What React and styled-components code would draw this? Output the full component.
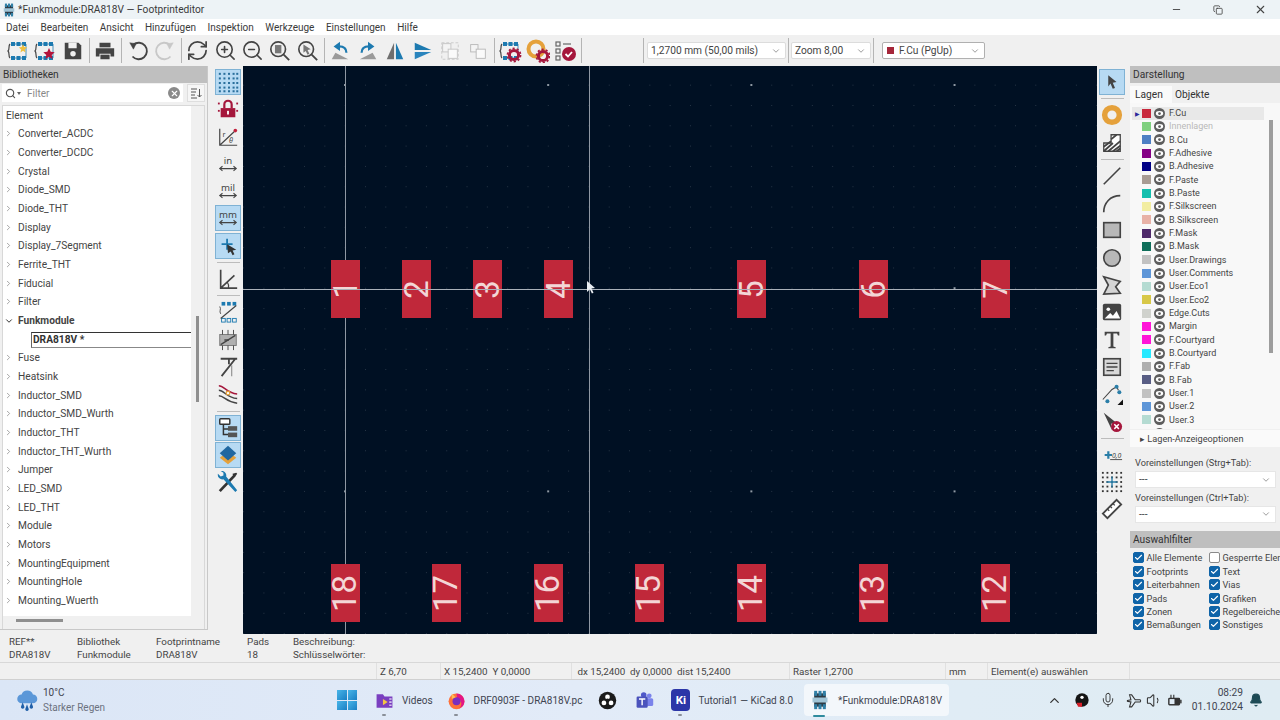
import React from "react";
import styled, { createGlobalStyle } from "styled-components";
import {
  Check,
  ChevronDown,
  ChevronRight,
  ChevronUp,
  Copy,
  Minus,
  RefreshCw,
  Search,
  X,
  ZoomIn,
  ZoomOut,
  Mic,
  Volume1,
  Bell,
} from "lucide-react";

const BLUE = "#1d7ab0";
const DARK = "#444444";
const RED = "#a5173c";
const ORANGE = "#e5a13b";
const GREY = "#9a9a9a";

const GlobalStyle = createGlobalStyle`
  html, body {
    margin: 0;
    padding: 0;
    width: 1280px;
    height: 720px;
    overflow: hidden;
    background: #f0f0f0;
    font-family: "Roboto", "Noto Sans", sans-serif;
    font-size: 10px;
    color: #333;
  }
  * { box-sizing: border-box; }
`;

const Window = styled.div`
  width: 1280px;
  height: 720px;
  display: flex;
  flex-direction: column;
  overflow: hidden;
`;

/* title + menu */
const TitleBar = styled.div`
  height: 19px;
  background: #edf3f6;
  display: flex;
  align-items: center;
  padding-left: 2px;
  gap: 2px;
  font-size: 10.2px;
  color: #3a3a3a;
`;

const TitleText = styled.span`
  flex: 1;
`;

const WinButton = styled.div`
  width: 40px;
  display: flex;
  justify-content: center;
  color: #444;
`;

const MenuBar = styled.div`
  height: 16px;
  background: #fff;
  display: flex;
  align-items: center;
  padding-left: 6px;
  gap: 11.5px;
  font-size: 10px;
  color: #3a3a3a;
`;

/* top toolbar */
const Toolbar = styled.div`
  height: 31px;
  background: #f0f0f0;
  display: flex;
  align-items: center;
  padding-left: 4px;
`;

const ToolButton = styled.div`
  width: 27.5px;
  height: 27px;
  display: flex;
  align-items: center;
  justify-content: center;
`;

const ToolSep = styled.div`
  width: 5px;
  height: 25px;
  margin-left: ${(p) => p.$ml || 0}px;
  display: flex;
  justify-content: center;
  &::after {
    content: "";
    width: 1px;
    background: #b4b4b4;
  }
`;

const Combo = styled.div`
  width: ${(p) => p.$w}px;
  height: ${(p) => p.$h || 17}px;
  background: #fff;
  border: 1px solid ${(p) => p.$border || "#dcdcdc"};
  border-radius: 2px;
  display: flex;
  align-items: center;
  justify-content: space-between;
  padding: 0 4px 0 3px;
  font-size: 10.2px;
  color: #444;
  margin-left: ${(p) => p.$ml || 0}px;
`;

const ComboLabel = styled.span`
  display: flex;
  align-items: center;
  gap: 5px;
  padding-left: 1px;
`;

const LayerDot = styled.span`
  width: 7px;
  height: 7px;
  background: #a5263a;
`;

/* main area */
const Main = styled.div`
  height: 568px;
  display: flex;
`;

const LeftPanel = styled.div`
  width: 208px;
  display: flex;
  flex-direction: column;
  border-right: 1px solid #c8c8c8;
  border-bottom: 1px solid #c8c8c8;
  margin-bottom: 4px;
`;

const PanelHeader = styled.div`
  height: 17px;
  flex: none;
  margin-top: ${(p) => p.$mt || 0}px;
  background: #bfbfbf;
  display: flex;
  align-items: center;
  padding-left: 3px;
  font-size: 10.2px;
  color: #333;
`;

const FilterRow = styled.div`
  height: 22px;
  flex: none;
  display: flex;
  align-items: flex-start;
  padding: 1px 2px 0 2px;
  gap: 4px;
`;

const FilterBox = styled.div`
  width: 181px;
  height: 18px;
  background: #fff;
  display: flex;
  align-items: center;
  padding: 0 3px;
  color: #888;
  font-size: 10px;
`;

const FilterCaret = styled.span`
  width: 0;
  height: 0;
  margin-left: 1px;
  border-left: 2.5px solid transparent;
  border-right: 2.5px solid transparent;
  border-top: 3px solid #666;
`;

const FilterHint = styled.span`
  margin-left: 6px;
`;

const FilterClear = styled.span`
  width: 12px;
  height: 12px;
  border-radius: 50%;
  background: #8a8a8a;
  color: #fff;
  display: flex;
  align-items: center;
  justify-content: center;
  margin-left: auto;
`;

const SortButton = styled.div`
  width: 18px;
  height: 18px;
  display: flex;
  align-items: center;
  justify-content: center;
  background: #f6f6f6;
  border: 1px solid #dedede;
`;

const TreeFrame = styled.div`
  position: relative;
  flex: 1;
  margin-left: 2px;
  margin-right: 2px;
  border: 1px solid #d8d8d8;
  border-width: 1px 1px 0 1px;
  overflow: hidden;
`;

const Tree = styled.div`
  width: 188px;
  height: 510px;
  background: #fff;
  overflow: hidden;
`;

const TreeRow = styled.div`
  height: 18.67px;
  display: flex;
  align-items: center;
  font-size: 10.2px;
  color: #444;
  font-weight: ${(p) => (p.$open ? 700 : 400)};
  padding-left: ${(p) => (p.$root ? 3 : 0)}px;
`;

const Chevron = styled.span`
  width: 11px;
  margin-right: 4px;
  display: flex;
  justify-content: center;
  color: ${(p) => (p.$open ? "#333" : "#8a8a8a")};
`;

const EditRow = styled.div`
  height: 18.67px;
  padding: 2px 0 1px 28px;
  display: flex;
`;

const EditBox = styled.div`
  flex: 1;
  border-top: 1px solid #333;
  border-left: 1px solid #666;
  border-bottom: 1px solid #888;
  font-size: 10.2px;
  font-weight: 700;
  color: #333;
  line-height: 14px;
  padding-left: 1px;
`;

const VScrollThumb = styled.div`
  position: absolute;
  left: 193px;
  top: 210px;
  width: 3px;
  height: 86px;
  background: #8f8f8f;
`;

const HScrollThumb = styled.div`
  position: absolute;
  left: 13px;
  bottom: 7px;
  width: 47px;
  height: 3px;
  background: #8f8f8f;
`;

const ToolStrip = styled.div`
  width: ${(p) => p.$w}px;
  flex: none;
  margin-left: ${(p) => p.$ml || 0}px;
  display: flex;
  flex-direction: column;
  align-items: center;
  padding-top: 3px;
`;

const StripButton = styled.div`
  width: 26px;
  height: 26px;
  flex: none;
  margin-bottom: 1.3px;
  display: flex;
  align-items: center;
  justify-content: center;
  background: ${(p) => (p.$on ? "#b7daf3" : "transparent")};
  border: 1px solid ${(p) => (p.$on ? "#7fb2d4" : "transparent")};
`;

const StripSep = styled.div`
  width: 23px;
  height: 1px;
  flex: none;
  background: #bcbcbc;
  margin: 2px 0 3px 0;
`;

/* canvas, pads sit on a free coordinate system */
const Canvas = styled.div`
  position: relative;
  flex: 1;
  overflow: hidden;
  background-color: #001023;
  background-image:
    radial-gradient(circle, rgba(184, 192, 200, 0.75) 0, rgba(184, 192, 200, 0.75) 0.8px, transparent 1.1px),
    radial-gradient(circle, rgba(130, 140, 150, 0.3) 0, rgba(130, 140, 150, 0.3) 0.5px, transparent 0.8px);
  background-size: 203.2px 203.2px, 20.32px 20.32px;
  background-position: 0.4px -82.6px, 92px 9px;
`;

const VLine = styled.div`
  position: absolute;
  top: 0;
  bottom: 0;
  left: ${(p) => p.$x}px;
  width: 1px;
  background: #8f98a3;
  z-index: ${(p) => p.$z};
`;

const HLine = styled.div`
  position: absolute;
  left: 0;
  right: 0;
  top: 222.5px;
  height: 1px;
  background: #aab1b9;
  z-index: 3;
`;

const Pad = styled.div`
  position: absolute;
  left: ${(p) => p.$x - 14.5}px;
  top: ${(p) => p.$y}px;
  width: 29px;
  height: 58px;
  background: #c0283a;
  display: flex;
  align-items: center;
  justify-content: center;
  z-index: 2;
`;

const PadNumber = styled.span`
  transform: rotate(-90deg);
  font-family: "Roboto", "Liberation Sans", sans-serif;
  font-weight: 400;
  font-size: 33px;
  line-height: 1;
  color: #f3d6d6;
`;

const PointerMark = styled.svg`
  position: absolute;
  left: 344px;
  top: 215px;
  z-index: 4;
`;

/* right panel */
const RightPanel = styled.div`
  width: 150px;
  margin-left: 3px;
  flex: none;
  display: flex;
  flex-direction: column;
  overflow: hidden;
`;

const Tabs = styled.div`
  height: 20px;
  flex: none;
  display: flex;
  align-items: flex-end;
`;

const Tab = styled.div`
  height: 17px;
  width: ${(p) => (p.$w ? `${p.$w}px` : "auto")};
  padding: 0 5px;
  margin-left: ${(p) => p.$ml || 0}px;
  background: ${(p) => (p.$active ? "#fafafa" : "transparent")};
  font-size: 10.2px;
  display: flex;
  align-items: center;
  color: #333;
`;

const LayerBox = styled.div`
  position: relative;
  height: 326px;
  flex: none;
  background: #f8f8f8;
  padding: 3.5px 0 0 2px;
  overflow: hidden;
`;

const LayerRow = styled.div`
  width: 132px;
  height: 13.33px;
  flex: none;
  display: flex;
  align-items: center;
  font-size: 9px;
  background: ${(p) => (p.$active ? "#e8e8e8" : "transparent")};
  color: ${(p) => (p.$muted ? "#b8b8b8" : "#444")};
`;

const LayerArrow = styled.span`
  width: 10px;
  font-size: 6px;
  color: #2a2a9a;
  padding-left: 3px;
`;

const Swatch = styled.span`
  width: 9px;
  height: 9px;
  flex: none;
  background: ${(p) => p.$c};
  margin-right: 3px;
`;

const LayerName = styled.span`
  margin-left: 4px;
`;

const LayerScroll = styled.div`
  position: absolute;
  left: 139px;
  top: 17px;
  width: 4px;
  height: 233px;
  background: #9d9d9d;
`;

const DisplayOptions = styled.div`
  height: 17px;
  flex: none;
  background: #fafafa;
  margin-top: 1px;
  padding-left: 10px;
  font-size: 9.2px;
  display: flex;
  align-items: center;
  gap: 1px;
  color: #444;
`;

const PresetLabel = styled.div`
  font-size: 9.2px;
  height: 11px;
  line-height: 11px;
  margin: ${(p) => p.$mt || 0}px 0 3px 5px;
  color: #444;
`;

const Preset = styled(Combo)`
  margin-left: 5px;
  height: 17px;
  border-color: #e6e6e6;
  border-radius: 0;
`;

const FilterGrid = styled.div`
  display: grid;
  grid-template-columns: 76px 80px;
  grid-auto-rows: 13.4px;
  padding: 3.3px 0 0 3px;
  white-space: nowrap;
`;

const CheckItem = styled.div`
  display: flex;
  align-items: center;
  gap: 2.5px;
  font-size: 9.2px;
  color: #444;
`;

const CheckMark = styled.span`
  width: 11px;
  height: 11px;
  flex: none;
  border-radius: 2px;
  background: ${(p) => (p.$off ? "#fff" : "#0f64a8")};
  border: 1px solid ${(p) => (p.$off ? "#8a8a8a" : "#0f64a8")};
  color: #fff;
  display: flex;
  align-items: center;
  justify-content: center;
`;

/* bottom bars */
const MessagePanel = styled.div`
  height: 28px;
  background: #f0f0f0;
  display: flex;
  padding: 1px 0 0 9px;
  font-size: 9.8px;
  color: #444;
`;

const MessageColumn = styled.div`
  width: ${(p) => p.$w}px;
  line-height: 13px;
`;

const StatusBar = styled.div`
  height: 18px;
  background: #f0f0f0;
  border-top: 1px solid #d8d8d8;
  border-bottom: 1px solid #d0d0d0;
  display: flex;
  font-size: 9.8px;
  color: #444;
`;

const StatusCell = styled.div`
  width: ${(p) => p.$w}px;
  flex: none;
  padding-left: 3px;
  line-height: 17px;
  border-right: 1px solid #e0e0e0;
  white-space: pre;
`;

const Taskbar = styled.div`
  height: 40px;
  background: linear-gradient(90deg, #dbe6f6 0%, #e2ebf8 45%, #e0ecf5 75%, #dfecf3 100%);
  display: flex;
  align-items: center;
  font-size: 10px;
  color: #3f4450;
`;

const Weather = styled.div`
  width: 337px;
  flex: none;
  padding-left: 14px;
  display: flex;
  align-items: center;
  gap: 3px;
`;

const WeatherText = styled.div`
  line-height: 15px;
  & > span {
    display: block;
    color: #6c7280;
  }
`;

const StartGrid = styled.div`
  width: 20px;
  flex: none;
  margin-right: 11px;
  display: grid;
  grid-template-columns: 9.5px 9.5px;
  grid-auto-rows: 9.5px;
  gap: 1px;
`;

const StartTile = styled.span`
  background: linear-gradient(135deg, #48b5e8, #1a7fc4);
`;

const TaskItem = styled.div`
  position: relative;
  height: 32px;
  flex: none;
  padding: 0 ${(p) => p.$pad || 7}px;
  margin-left: ${(p) => p.$ml || 0}px;
  width: ${(p) => (p.$w ? `${p.$w}px` : "auto")};
  display: flex;
  align-items: center;
  gap: 8px;
  white-space: nowrap;
  border-radius: 4px;
  background: ${(p) => (p.$active ? "#f3f7fb" : "transparent")};
`;

const RunDash = styled.span`
  position: absolute;
  bottom: ${(p) => (p.$active ? -1 : 0)}px;
  left: ${(p) => p.$left}px;
  width: ${(p) => (p.$active ? 12 : 4)}px;
  height: 2px;
  border-radius: 1px;
  background: ${(p) => (p.$active ? "#2f8b9e" : "#8a8f98")};
`;

const Tray = styled.div`
  margin-left: auto;
  padding-right: 17px;
  display: flex;
  align-items: center;
`;

const TrayIcon = styled.span`
  display: flex;
  margin-left: ${(p) => p.$ml || 0}px;
  color: #333;
`;

const Clock = styled.div`
  margin-left: 9px;
  text-align: right;
  line-height: 14px;
  font-size: 10.2px;
`;

const Svg = ({ s = 22, children }) => (
  <svg width={s} height={s} viewBox="0 0 24 24" fill="none">
    {children}
  </svg>
);

/* a footprint chip: rows of blue pads with a bracket */
const ChipBase = () => (
  <g fill={BLUE}>
    <rect x="5" y="3" width="4" height="4" />
    <rect x="10.5" y="3" width="4" height="4" />
    <rect x="16" y="3" width="4" height="4" />
    <rect x="5" y="17" width="4" height="4" />
    <rect x="10.5" y="17" width="4" height="4" />
    <rect x="16" y="17" width="4" height="4" />
    <path d="M4 5C2 7 4 10 2 12c2 2 0 5 2 7" stroke={DARK} strokeWidth="1.2" fill="none" />
    <path d="M20 5v14M5 5h15M5 19h15" stroke={BLUE} strokeWidth="0.8" />
  </g>
);

const NewChip = () => (
  <Svg s={24}>
    <ChipBase />
    <path d="M17 5l1.2 3 3 .6-2.4 2 .8 3-2.6-1.8-2.6 1.8.8-3-2.4-2 3-.6z" fill="#f0c040" />
  </Svg>
);
const StarChip = () => (
  <Svg s={24}>
    <ChipBase />
    <path d="M16 9l1.7 3.8 4 .4-3 2.7.9 4-3.6-2.1-3.6 2.1.9-4-3-2.7 4-.4z" fill="#b3123a" />
  </Svg>
);
const SaveIcon = () => (
  <Svg>
    <path d="M3 3h15l3 3v15H3z" fill={DARK} />
    <rect x="7" y="3" width="9" height="6" fill="#f0f0f0" />
    <circle cx="12" cy="15" r="3" fill="#f0f0f0" />
  </Svg>
);
const PrintIcon = () => (
  <Svg>
    <path d="M6 3h12v5H6z" fill={DARK} />
    <path d="M2 9h20v9h-4v-3H6v3H2z" fill={DARK} />
    <path d="M7 16h10v5H7z" fill={DARK} />
  </Svg>
);
const UndoIcon = ({ redo }) => (
  <Svg>
    <g
      stroke={redo ? "#c8c8c8" : DARK}
      strokeWidth="2"
      transform={redo ? "matrix(-1 0 0 1 24 0)" : undefined}
    >
      <path d="M7 5a9 9 0 1 1-1 13" />
      <path d="M3 3l4 7 3-6z" fill={redo ? "#c8c8c8" : DARK} strokeWidth="0.5" />
    </g>
  </Svg>
);
const ZoomFit = () => (
  <Svg>
    <circle cx="10" cy="10" r="8" stroke={DARK} strokeWidth="1.8" />
    <rect x="6.5" y="5.5" width="7" height="9" fill="#777" />
    <path d="M16 16l6 6" stroke={DARK} strokeWidth="2" />
  </Svg>
);
const ZoomSel = () => (
  <Svg>
    <circle cx="10" cy="10" r="8" stroke={DARK} strokeWidth="1.8" />
    <path d="M7 5l8 5-3.5 1 2 4-2 1-2-4L7 14z" fill="#777" />
    <path d="M16 16l6 6" stroke={DARK} strokeWidth="2" />
  </Svg>
);
const RotateIcon = ({ cw }) => (
  <Svg>
    <path d={cw ? "M3 21l14-7 4 7z" : "M21 21L7 14l-4 7z"} fill={GREY} />
    <g transform={cw ? undefined : "matrix(-1 0 0 1 24 0)"}>
      <path d="M5 14c0-5 3-7 8-7" stroke={BLUE} strokeWidth="2.4" />
      <path d="M12 2l7 5-7 5z" fill={BLUE} />
    </g>
  </Svg>
);
const MirrorV = () => (
  <Svg>
    <path d="M11 3L3 21h8z" fill="#6f6f6f" />
    <path d="M13 3l8 18h-8z" fill={BLUE} />
  </Svg>
);
const MirrorH = () => (
  <Svg>
    <path d="M3 3l18 8H3z" fill={BLUE} />
    <path d="M3 13h18L3 21z" fill="#2a84bd" />
  </Svg>
);
const GroupIcon = () => (
  <Svg>
    <rect x="3" y="3" width="18" height="18" stroke="#c9c9c9" strokeDasharray="3 2" />
    <rect x="4" y="4" width="9" height="9" fill="#f4f4f4" stroke="#c4c4c4" />
    <rect x="10" y="10" width="10" height="10" fill="#fafafa" stroke="#c4c4c4" />
  </Svg>
);
const UngroupIcon = () => (
  <Svg>
    <rect x="4" y="5" width="8" height="8" fill="#f4f4f4" stroke="#b8b8b8" />
    <rect x="10" y="10" width="10" height="10" fill="#fafafa" stroke="#b8b8b8" />
  </Svg>
);
const Gear = ({ x, y }) => (
  <g transform={`translate(${x} ${y})`}>
    <circle r="4.6" fill="none" stroke={RED} strokeWidth="3" />
    <circle r="6.6" fill="none" stroke={RED} strokeWidth="1.6" strokeDasharray="2.2 2" />
  </g>
);
const ChipGear = () => (
  <Svg s={24}>
    <ChipBase />
    <Gear x={16} y={16} />
  </Svg>
);
const PadGear = () => (
  <Svg s={24}>
    <circle cx="10" cy="10" r="7.5" stroke={ORANGE} strokeWidth="4" />
    <Gear x={17} y={17} />
  </Svg>
);
const CheckList = () => (
  <Svg s={24}>
    <g stroke="#666" strokeWidth="1.2">
      <rect x="3" y="3" width="4" height="4" />
      <rect x="3" y="10" width="4" height="4" />
      <rect x="3" y="17" width="4" height="4" />
      <path d="M10 5h8" />
    </g>
    <circle cx="16" cy="15" r="7" fill={RED} />
    <path d="M12.5 15l2.5 2.5 4-4.5" stroke="#fff" strokeWidth="1.8" />
  </Svg>
);

const GridIcon = () => (
  <Svg>
    {[3, 8, 13, 18, 22].map((y) =>
      [3, 8, 13, 18, 22].map((x) => <rect key={`${x}${y}`} x={x - 1} y={y - 1} width="2.2" height="2.2" fill="#2a6f9c" />)
    )}
  </Svg>
);
const LockIcon = () => (
  <Svg>
    <path d="M8 11V7a4 4 0 0 1 8 0v4" stroke={RED} strokeWidth="2.4" />
    <rect x="4" y="11" width="16" height="10" fill={RED} />
    <rect x="11" y="14" width="2" height="4" fill="#fff" />
    <g fill={RED}>
      <rect x="1" y="5" width="2" height="2" />
      <rect x="21" y="5" width="2" height="2" />
      <rect x="1" y="13" width="2" height="2" />
      <rect x="21" y="13" width="2" height="2" />
    </g>
  </Svg>
);
const PolarIcon = () => (
  <Svg>
    <path d="M3 3v18h19M3 21L19 6" stroke={DARK} strokeWidth="1.3" />
    <circle cx="20" cy="5" r="2" fill="#c2203c" />
    <text x="6" y="12" fontSize="8" fontFamily="Noto Sans" fill={DARK}>r</text>
    <text x="13" y="19" fontSize="8" fontStyle="italic" fontFamily="Noto Sans" fill={DARK}>θ</text>
  </Svg>
);
const UnitIcon = ({ unit }) => (
  <Svg>
    <text x="12" y="12" textAnchor="middle" fontSize="10.5" fontFamily="Noto Sans" fill={DARK}>{unit}</text>
    <path d="M3 17h18M6 14.5L3 17l3 2.5M18 14.5l3 2.5-3 2.5" stroke={DARK} strokeWidth="1.2" />
  </Svg>
);
const FullCross = () => (
  <Svg>
    <path d="M11 4v12M5 10h12" stroke={BLUE} strokeWidth="2" />
    <path d="M11 10l10 6-4 1 2 4-2 1-2-4-3 2z" fill="#333" />
  </Svg>
);
const AngleIcon = () => (
  <Svg>
    <path d="M4 2v20h18M4 22L19 8" stroke={DARK} strokeWidth="1.8" />
    <path d="M11 15a9 9 0 0 1 1.5 7" stroke={DARK} strokeWidth="1.4" />
  </Svg>
);
const RatsnestIcon = () => (
  <Svg>
    <g fill={BLUE}>
      <rect x="5" y="1" width="4" height="4" />
      <rect x="11" y="1" width="4" height="4" />
      <rect x="17" y="1" width="4" height="4" />
    </g>
    <g stroke={BLUE} fill="none">
      <rect x="5" y="19" width="4" height="4" />
      <rect x="11" y="19" width="4" height="4" />
      <rect x="17" y="19" width="4" height="4" />
    </g>
    <path d="M3 6c2 3-1 5 1 8" stroke={DARK} />
    <path d="M4 19L21 5" stroke={DARK} strokeWidth="1.3" />
  </Svg>
);
const ShapeChip = () => (
  <Svg>
    <rect x="3" y="6" width="18" height="12" fill="#b0b0b0" stroke="#777" />
    <path d="M6 1v5M12 1v5M18 1v5M6 18v5M12 18v5M18 18v5" stroke={DARK} />
    <path d="M4 17L20 7" stroke={DARK} strokeWidth="1.4" />
    <path d="M8 12h5" stroke={DARK} strokeWidth="1.6" />
  </Svg>
);
const TraceT = () => (
  <Svg>
    <path d="M4 3h18M13 3v6M20 3L5 22" stroke={DARK} strokeWidth="2" />
    <path d="M16 10v12" stroke="#999" strokeWidth="1.4" />
  </Svg>
);
const WavyTracks = () => (
  <Svg>
    <path d="M2 3c6 0 8 8 20 9" stroke={RED} strokeWidth="1.6" />
    <path d="M2 8c6 0 8 8 20 9" stroke={DARK} strokeWidth="1.6" />
    <path d="M2 14c6 0 8 7 20 8" stroke={DARK} strokeWidth="1.6" />
    <circle cx="12" cy="11" r="2" fill="#fff" stroke={ORANGE} strokeWidth="1.4" />
  </Svg>
);
const TreeIcon = () => (
  <Svg>
    <rect x="3" y="2" width="11" height="6" rx="1" stroke="#333" strokeWidth="1.6" fill="#fff" />
    <path d="M7 8v11h5M7 13h5" stroke="#333" strokeWidth="1.6" />
    <rect x="12" y="10" width="10" height="5" fill="#555" />
    <rect x="12" y="17" width="10" height="5" fill="#555" />
  </Svg>
);
const LayersIcon = () => (
  <Svg>
    <path d="M12 8l9 7-9 7-9-7z" fill={ORANGE} />
    <path d="M12 2l9 8-9 8-9-8z" fill="#2067a0" />
  </Svg>
);
const ToolsIcon = () => (
  <Svg>
    <path d="M3 22L19 5" stroke="#333" strokeWidth="3" />
    <path d="M17 3l4-1 1 1-2 3-2 1z" fill="#333" />
    <path d="M22 21l-2 2L7 9a5 5 0 0 1-6-6l3 3 3-1 0-3-3-2a5 5 0 0 1 6 6z" fill={BLUE} />
  </Svg>
);

const ArrowIcon = () => (
  <Svg s={18}>
    <path d="M7 3l11 9-5 1 3 7-3 1-3-7-3 4z" fill={DARK} />
  </Svg>
);
const PadRing = () => (
  <Svg>
    <circle cx="12" cy="12" r="8" stroke={ORANGE} strokeWidth="6" />
  </Svg>
);
const HatchIcon = () => (
  <Svg>
    <path d="M11 3h10v18H3v-9h8z" fill="#fff" stroke={DARK} strokeWidth="1.4" />
    <path d="M3 16l8-6M3 21L13 12M8 21l13-11M13 21l8-6M11 8l6-5M17 21l4-3" stroke={DARK} strokeWidth="2" />
  </Svg>
);
const LineIcon = () => (
  <Svg>
    <path d="M3 21L21 3" stroke={DARK} strokeWidth="1.8" />
  </Svg>
);
const ArcIcon = () => (
  <Svg>
    <path d="M3 22C3 12 10 4 21 4" stroke={DARK} strokeWidth="1.8" />
  </Svg>
);
const RectIcon = () => (
  <Svg>
    <rect x="3" y="4" width="18" height="16" fill="#b8b8b8" stroke={DARK} strokeWidth="1.8" />
  </Svg>
);
const CircleIcon = () => (
  <Svg>
    <circle cx="12" cy="12" r="9" fill="#b8b8b8" stroke={DARK} strokeWidth="1.8" />
  </Svg>
);
const PolygonIcon = () => (
  <Svg>
    <path d="M3 3l18 5-5 6 5 7-18 1 5-10z" fill="#d4d4d4" stroke={DARK} strokeWidth="1.8" />
  </Svg>
);
const ImageIcon = () => (
  <Svg>
    <rect x="2" y="3" width="20" height="18" rx="2" fill={DARK} />
    <circle cx="8" cy="9" r="2" fill="#fff" />
    <path d="M4 19l6-6 3 3 4-5 4 8z" fill="#fff" />
  </Svg>
);
const TextIcon = () => (
  <Svg>
    <path d="M4 3h16v4h-1.5l-1-2H13.5v14l2.5 1v1H8v-1l2.5-1V5H6.5l-1 2H4z" fill={DARK} />
  </Svg>
);
const TextBoxIcon = () => (
  <Svg>
    <rect x="3" y="3" width="18" height="18" fill="#d8d8d8" stroke={DARK} strokeWidth="1.8" />
    <path d="M6 8h12M6 12h12M6 16h8" stroke={DARK} strokeWidth="1.4" />
  </Svg>
);
const AnchorPath = () => (
  <Svg>
    <path d="M2 18l10-11 5-3 2 4" stroke={DARK} strokeWidth="1.2" />
    <circle cx="17" cy="4" r="2.2" fill="#2a7ea8" />
    <circle cx="7" cy="20" r="2.2" fill="#2a7ea8" />
    <circle cx="20" cy="10" r="2.2" fill="#2a7ea8" />
    <path d="M24 18v6h-6z" fill="#111" />
  </Svg>
);
const DeleteTool = () => (
  <Svg>
    <path d="M3 2l14 11-6 1 1 7z" fill={DARK} />
    <circle cx="17" cy="17" r="6" fill={RED} />
    <path d="M14.5 14.5l5 5M19.5 14.5l-5 5" stroke="#fff" strokeWidth="1.6" />
  </Svg>
);
const OriginIcon = () => (
  <Svg>
    <path d="M8 8v8M4 12h8" stroke="#2a7ea8" strokeWidth="2.4" />
    <path d="M10 17h13" stroke={DARK} />
    <text x="12" y="15" fontSize="7.5" fontStyle="italic" fontFamily="Noto Sans" fill={DARK}>0,0</text>
  </Svg>
);
const GridOrigin = () => (
  <Svg>
    {[2, 7, 12, 17, 22].map((y) =>
      [2, 7, 12, 17, 22].map((x) => <rect key={`${x}${y}`} x={x - 1} y={y - 1} width="2" height="2" fill="#333" />)
    )}
    <path d="M12 6v12M6 12h12" stroke="#2a7ea8" strokeWidth="1.5" />
  </Svg>
);
const RulerIcon = () => (
  <Svg>
    <path d="M2 17L17 2l5 5L7 22z" fill="#fff" stroke={DARK} strokeWidth="2" />
    <path d="M7 12l2 2M10 9l2 2M13 6l2 2" stroke={DARK} strokeWidth="1.4" />
  </Svg>
);

const EyeBadge = () => (
  <svg width="11" height="11" viewBox="0 0 12 12">
    <circle cx="6" cy="6" r="6" fill="#5d5d5d" />
    <ellipse cx="6" cy="6" rx="4" ry="2.6" fill="#fff" />
    <circle cx="6" cy="6" r="1.5" fill="#5d5d5d" />
  </svg>
);

const SortIcon = () => (
  <svg width="12" height="12" viewBox="0 0 12 12" fill="none" stroke="#555">
    <path d="M1 2h6M1 5h5M1 8h4M1 11h6" />
    <path d="M9.5 2v8M7.5 8l2 2 2-2" />
  </svg>
);

/* taskbar */
const WeatherIcon = () => (
  <Svg s={26}>
    <path d="M7 15a4 4 0 0 1 0-8 5.5 5.5 0 0 1 10.5 0 4 4 0 0 1 0 8z" fill="#5b97d8" />
    <path d="M8 14l-1.5 4a1.6 1.6 0 1 0 3 0zM16 14l-1.5 4a1.6 1.6 0 1 0 3 0zM12 16l-1.5 4a1.6 1.6 0 1 0 3 0z" fill="#1f5fa8" />
  </Svg>
);
const FolderVideo = () => (
  <Svg s={19}>
    <path d="M2 4h8l2 3h10v14H2z" fill="#7a3fc0" />
    <path d="M10 10l6 4-6 4z" fill="#f4c542" />
    <path d="M18 9h3v2h-3zM18 13h3v2h-3zM18 17h3v2h-3z" fill="#fff" opacity="0.7" />
  </Svg>
);
const FirefoxIcon = () => (
  <Svg s={19}>
    <circle cx="12" cy="13" r="10" fill="#ff7139" />
    <path d="M12 3c5 0 10 4 10 10s-4 8-7 9c4-3 4-8 1-11-1 1-2 1-3 0 0-3-1-6-1-8z" fill="#e31587" />
    <circle cx="12" cy="13" r="5" fill="#7b2fbf" />
    <path d="M6 3l5 5-5 2z" fill="#ffbd4f" />
  </Svg>
);
const ObsIcon = () => (
  <Svg s={19}>
    <circle cx="12" cy="12" r="11" fill="#1b1b1b" />
    <circle cx="12" cy="7.5" r="3" fill="#fff" />
    <circle cx="7.5" cy="15" r="3" fill="#fff" />
    <circle cx="16.5" cy="15" r="3" fill="#fff" />
    <circle cx="12" cy="12" r="2.4" fill="#1b1b1b" />
  </Svg>
);
const TeamsIcon = () => (
  <Svg s={19}>
    <circle cx="18" cy="6" r="3" fill="#7b83eb" />
    <rect x="14" y="9" width="9" height="10" rx="2" fill="#7b83eb" />
    <circle cx="11" cy="5" r="3.5" fill="#5059c9" />
    <rect x="2" y="7" width="14" height="14" rx="1.5" fill="#4b53bc" />
    <path d="M5 10h8M9 10v8" stroke="#fff" strokeWidth="1.8" />
  </Svg>
);
const KiBadge = styled.span`
  width: 19px;
  height: 22px;
  border-radius: 4px;
  background: #2b36a8;
  color: #fff;
  font-weight: 700;
  font-size: 11.5px;
  display: flex;
  align-items: center;
  justify-content: center;
`;
const EditorIcon = ({ s = 20 }) => (
  <Svg s={s}>
    <rect x="5" y="4" width="14" height="16" fill="#2c3a44" />
    <g fill="#2f7fa6">
      <rect x="5" y="1" width="3.6" height="6" />
      <rect x="10.2" y="1" width="3.6" height="6" />
      <rect x="15.4" y="1" width="3.6" height="6" />
      <rect x="5" y="17" width="3.6" height="6" />
      <rect x="10.2" y="17" width="3.6" height="6" />
      <rect x="15.4" y="17" width="3.6" height="6" />
    </g>
    <rect x="3" y="9" width="18" height="6" fill="#9fc4d6" />
  </Svg>
);
const ObsTray = () => (
  <Svg s={16}>
    <circle cx="12" cy="12" r="10" fill="#151515" />
    <circle cx="12" cy="8" r="2.5" fill="#fff" />
    <path d="M4 16h8v6H6z" fill="#d8202a" />
  </Svg>
);
const PlaneTray = () => (
  <Svg s={17}>
    <path d="M2 12l5-1-2-7 3 0 5 7h7a2 2 0 0 1 0 3h-7l-5 7H5l2-7-5-1z" stroke="#333" strokeWidth="1.5" />
  </Svg>
);
const BatteryTray = () => (
  <Svg s={17}>
    <rect x="3" y="8" width="17" height="11" rx="2" fill="#333" />
    <rect x="20" y="11" width="2" height="5" fill="#333" />
    <path d="M7 4v5M11 4v5" stroke="#333" strokeWidth="1.6" />
    <rect x="5" y="10" width="7" height="7" fill="#e0ecf5" />
  </Svg>
);

const TOP_GROUPS = [
  [NewChip, StarChip, SaveIcon],
  [PrintIcon],
  [UndoIcon, () => <UndoIcon redo />],
  [
    () => <RefreshCw size={23} color={DARK} strokeWidth={1.8} />,
    () => <ZoomIn size={23} color={DARK} strokeWidth={1.7} />,
    () => <ZoomOut size={23} color={DARK} strokeWidth={1.7} />,
    ZoomFit,
    ZoomSel,
  ],
  [
    () => <RotateIcon />,
    () => <RotateIcon cw />,
    MirrorV,
    MirrorH,
    GroupIcon,
    UngroupIcon,
  ],
  [ChipGear, PadGear, CheckList],
];

const LEFT_TOOLS = [
  { I: GridIcon, on: true },
  { I: LockIcon },
  { I: PolarIcon },
  { I: () => <UnitIcon unit="in" /> },
  { I: () => <UnitIcon unit="mil" /> },
  { I: () => <UnitIcon unit="mm" />, on: true },
  { I: FullCross, on: true },
  "sep",
  { I: AngleIcon },
  "sep",
  { I: RatsnestIcon },
  { I: ShapeChip },
  { I: TraceT },
  { I: WavyTracks },
  "sep",
  { I: TreeIcon, on: true },
  { I: LayersIcon, on: true },
  { I: ToolsIcon },
];

const RIGHT_TOOLS = [
  { I: ArrowIcon, on: true },
  "sep",
  { I: PadRing },
  { I: HatchIcon },
  "sep",
  { I: LineIcon },
  { I: ArcIcon },
  { I: RectIcon },
  { I: CircleIcon },
  { I: PolygonIcon },
  { I: ImageIcon },
  { I: TextIcon },
  { I: TextBoxIcon },
  { I: AnchorPath },
  { I: DeleteTool },
  "sep",
  { I: OriginIcon },
  { I: GridOrigin },
  { I: RulerIcon },
];

const LIBS_A = [
  "Converter_ACDC", "Converter_DCDC", "Crystal", "Diode_SMD", "Diode_THT", "Display",
  "Display_7Segment", "Ferrite_THT", "Fiducial", "Filter",
];
const LIBS_B = [
  "Fuse", "Heatsink", "Inductor_SMD", "Inductor_SMD_Wurth", "Inductor_THT", "Inductor_THT_Wurth",
  "Jumper", "LED_SMD", "LED_THT", "Module", "Motors", "MountingEquipment", "MountingHole", "Mounting_Wuerth",
];

const LAYERS = [
  ["F.Cu", "#c8283c"], ["Innenlagen", "#7fd07f"], ["B.Cu", "#4d7fc4"], ["F.Adhesive", "#840084"],
  ["B.Adhesive", "#000084"], ["F.Paste", "#a89c94"], ["B.Paste", "#14bfae"], ["F.Silkscreen", "#f2eda1"],
  ["B.Silkscreen", "#e8b2a7"], ["F.Mask", "#4e2a6a"], ["B.Mask", "#0f6e5a"], ["User.Drawings", "#c2c2c2"],
  ["User.Comments", "#5e96d8"], ["User.Eco1", "#b4dbd2"], ["User.Eco2", "#d8c848"], ["Edge.Cuts", "#d0d2cd"],
  ["Margin", "#ff14d8"], ["F.Courtyard", "#ff14d8"], ["B.Courtyard", "#26e9ff"], ["F.Fab", "#afafaf"],
  ["B.Fab", "#585d84"], ["User.1", "#c2c2c2"], ["User.2", "#5e96d8"], ["User.3", "#b4dbd2"],
  ["", "transparent"],
];

const FILTERS = [
  ["Alle Elemente"], ["Gesperrte Elemente", true],
  ["Footprints"], ["Text"],
  ["Leiterbahnen"], ["Vias"],
  ["Pads"], ["Grafiken"],
  ["Zonen"], ["Regelbereiche"],
  ["Bemaßungen"], ["Sonstiges"],
];

const TOP_PADS = [[1, 102], [2, 173], [3, 244], [4, 315], [5, 508], [6, 630], [7, 752]];
const BOTTOM_PADS = [[18, 102], [17, 203], [16, 305], [15, 406], [14, 508], [13, 630], [12, 752]];

const MESSAGES = [
  [68, "REF**", "DRA818V"],
  [79, "Bibliothek", "Funkmodule"],
  [91, "Footprintname", "DRA818V"],
  [46, "Pads", "18"],
  [200, "Beschreibung:", "Schlüsselwörter:"],
];

const STATUS = [
  [377, ""],
  [64, "Z 6,70"],
  [131, "X 15,2400  Y 0,0000"],
  [218, " dx 15,2400  dy 0,0000  dist 15,2400"],
  [156, "Raster 1,2700"],
  [42, "mm"],
  [142, "Element(e) auswählen"],
];

const Strip = ({ tools, w, ml }) => (
  <ToolStrip $w={w} $ml={ml}>
    {tools.map((t, i) =>
      t === "sep" ? (
        <StripSep key={i} />
      ) : (
        <StripButton key={i} $on={t.on}>
          <t.I />
        </StripButton>
      )
    )}
  </ToolStrip>
);

export default function App() {
  return (
    <Window>
      <GlobalStyle />
      <TitleBar>
        <EditorIcon s={14} />
        <TitleText>*Funkmodule:DRA818V — Footprinteditor</TitleText>
        <WinButton><Minus size={11} /></WinButton>
        <WinButton><Copy size={10} /></WinButton>
        <WinButton><X size={13} /></WinButton>
      </TitleBar>
      <MenuBar>
        {["Datei", "Bearbeiten", "Ansicht", "Hinzufügen", "Inspektion", "Werkzeuge", "Einstellungen", "Hilfe"].map((m) => (
          <span key={m}>{m}</span>
        ))}
      </MenuBar>
      <Toolbar>
        {TOP_GROUPS.map((group, g) => (
          <React.Fragment key={g}>
            {group.map((Icon, i) => (
              <ToolButton key={i}>
                <Icon />
              </ToolButton>
            ))}
            <ToolSep />
          </React.Fragment>
        ))}
        <ToolSep $ml={57} />
        <Combo $w={139} $ml={1}>
          <span>1,2700 mm (50,00 mils)</span>
          <ChevronDown size={10} color="#888" />
        </Combo>
        <ToolSep />
        <Combo $w={80}>
          <span>Zoom 8,00</span>
          <ChevronDown size={10} color="#888" />
        </Combo>
        <ToolSep />
        <Combo $w={103} $border="#b0b0b0" $ml={6}>
          <ComboLabel>
            <LayerDot />
            F.Cu (PgUp)
          </ComboLabel>
          <ChevronDown size={10} color="#888" />
        </Combo>
      </Toolbar>

      <Main>
        <LeftPanel>
          <PanelHeader>Bibliotheken</PanelHeader>
          <FilterRow>
            <FilterBox>
              <Search size={11} color="#555" strokeWidth={2.5} />
              <FilterCaret />
              <FilterHint>Filter</FilterHint>
              <FilterClear><X size={9} strokeWidth={3} /></FilterClear>
            </FilterBox>
            <SortButton><SortIcon /></SortButton>
          </FilterRow>
          <TreeFrame>
            <Tree>
              <TreeRow $root>Element</TreeRow>
              {LIBS_A.map((name) => (
                <TreeRow key={name}>
                  <Chevron><ChevronRight size={9} /></Chevron>
                  <span>{name}</span>
                </TreeRow>
              ))}
              <TreeRow $open>
                <Chevron $open><ChevronDown size={10} strokeWidth={2.4} /></Chevron>
                <span>Funkmodule</span>
              </TreeRow>
              <EditRow>
                <EditBox>DRA818V *</EditBox>
              </EditRow>
              {LIBS_B.map((name) => (
                <TreeRow key={name}>
                  <Chevron><ChevronRight size={9} /></Chevron>
                  <span>{name}</span>
                </TreeRow>
              ))}
            </Tree>
            <VScrollThumb />
            <HScrollThumb />
          </TreeFrame>
        </LeftPanel>

        <Strip tools={LEFT_TOOLS} w={30} ml={5} />

        <Canvas>
          <VLine $x={102} $z={1} />
          <VLine $x={345.5} $z={3} />
          <HLine />
          {TOP_PADS.map(([n, x]) => (
            <Pad key={n} $x={x} $y={194}>
              <PadNumber>{n}</PadNumber>
            </Pad>
          ))}
          {BOTTOM_PADS.map(([n, x]) => (
            <Pad key={n} $x={x} $y={498}>
              <PadNumber>{n}</PadNumber>
            </Pad>
          ))}
          <PointerMark width="9" height="13" viewBox="0 0 9 13">
            <path d="M0 0l8 7-3.5.4 2 4.3-1.6.8-2-4.3L0 11z" fill="#e8edf2" />
          </PointerMark>
        </Canvas>

        <Strip tools={RIGHT_TOOLS} w={30} />

        <RightPanel>
          <PanelHeader>Darstellung</PanelHeader>
          <Tabs>
            <Tab $active $w={42}>Lagen</Tab>
            <Tab $ml={-2}>Objekte</Tab>
          </Tabs>
          <LayerBox>
            {LAYERS.map(([name, c], i) => (
              <LayerRow key={name || "clipped"} $active={i === 0} $muted={i === 1}>
                <LayerArrow>{i === 0 ? "▶" : ""}</LayerArrow>
                <Swatch $c={c} />
                <EyeBadge />
                <LayerName>{name}</LayerName>
              </LayerRow>
            ))}
            <LayerScroll />
          </LayerBox>
          <DisplayOptions>▸ Lagen-Anzeigeoptionen</DisplayOptions>
          <PresetLabel $mt={10}>Voreinstellungen (Strg+Tab):</PresetLabel>
          <Preset $w={141}>
            <span>---</span>
            <ChevronDown size={10} color="#888" />
          </Preset>
          <PresetLabel $mt={3.5}>Voreinstellungen (Ctrl+Tab):</PresetLabel>
          <Preset $w={141}>
            <span>---</span>
            <ChevronDown size={10} color="#888" />
          </Preset>
          <PanelHeader $mt={8.5}>Auswahlfilter</PanelHeader>
          <FilterGrid>
            {FILTERS.map(([label, off]) => (
              <CheckItem key={label}>
                <CheckMark $off={off}>{!off && <Check size={9} strokeWidth={3} />}</CheckMark>
                <span>{label}</span>
              </CheckItem>
            ))}
          </FilterGrid>
        </RightPanel>
      </Main>

      <MessagePanel>
        {MESSAGES.map(([w, a, b]) => (
          <MessageColumn key={a} $w={w}>
            <div>{a}</div>
            <div>{b}</div>
          </MessageColumn>
        ))}
      </MessagePanel>

      <StatusBar>
        {STATUS.map(([w, text], i) => (
          <StatusCell key={i} $w={w}>{text}</StatusCell>
        ))}
      </StatusBar>

      <Taskbar>
        <Weather>
          <WeatherIcon />
          <WeatherText>
            10°C
            <span>Starker Regen</span>
          </WeatherText>
        </Weather>
        <StartGrid>
          <StartTile /><StartTile /><StartTile /><StartTile />
        </StartGrid>
        <TaskItem>
          <FolderVideo />
          <span>Videos</span>
          <RunDash $left={14} />
        </TaskItem>
        <TaskItem>
          <FirefoxIcon />
          <span>DRF0903F - DRA818V.pc</span>
          <RunDash $left={14} />
        </TaskItem>
        <TaskItem $pad={9}><ObsIcon /></TaskItem>
        <TaskItem $pad={9}><TeamsIcon /></TaskItem>
        <TaskItem $pad={8}>
          <KiBadge>Ki</KiBadge>
          <span>Tutorial1 — KiCad 8.0</span>
          <RunDash $left={15} />
        </TaskItem>
        <TaskItem $pad={6} $ml={3} $w={145} $active>
          <EditorIcon />
          <span>*Funkmodule:DRA818V</span>
          <RunDash $left={9} $active />
        </TaskItem>
        <Tray>
          <TrayIcon><ChevronUp size={15} /></TrayIcon>
          <TrayIcon $ml={12}><ObsTray /></TrayIcon>
          <TrayIcon $ml={10}><Mic size={16} strokeWidth={1.4} /></TrayIcon>
          <TrayIcon $ml={10}><PlaneTray /></TrayIcon>
          <TrayIcon $ml={3}><Volume1 size={17} strokeWidth={1.5} /></TrayIcon>
          <TrayIcon $ml={3}><BatteryTray /></TrayIcon>
          <Clock>
            08:29
            <br />
            01.10.2024
          </Clock>
          <TrayIcon $ml={6}><Bell size={14} fill="#1d4a55" color="#1d4a55" /></TrayIcon>
        </Tray>
      </Taskbar>
    </Window>
  );
}
